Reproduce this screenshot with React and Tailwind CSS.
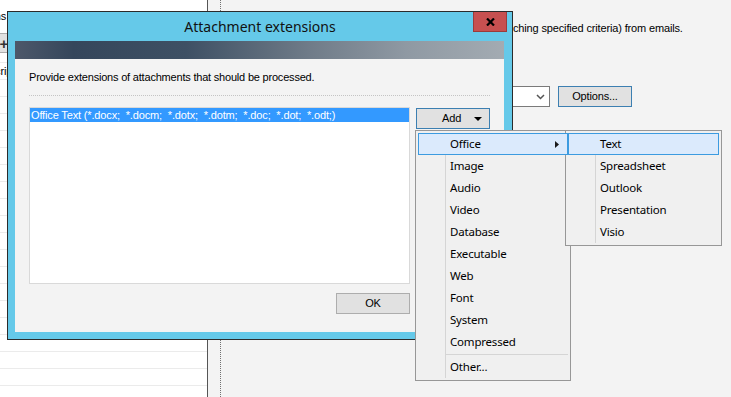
import React from "react";

const mainItems = ["Office", "Image", "Audio", "Video", "Database", "Executable", "Web", "Font", "System", "Compressed"];
const subItems = ["Text", "Spreadsheet", "Outlook", "Presentation", "Visio"];

function MenuItem({ label, active, arrow }) {
  return (
    <div
      className={
        "relative z-10 h-[22px] flex items-center pl-[31px] whitespace-nowrap " +
        (active ? "border border-[#3c9be0] bg-[#dbeafc]" : "border border-transparent")
      }
    >
      <span>{label}</span>
      {arrow && (
        <svg className="absolute right-[8px] top-[7px]" width="4" height="7" viewBox="0 0 4 7">
          <path d="M0 0 L4 3.5 L0 7 Z" fill="#1a1a1a" />
        </svg>
      )}
    </div>
  );
}

export default function App() {
  const rows = Array.from({ length: 20 });
  return (
    <div className="relative w-[731px] h-[397px] overflow-hidden bg-[#f3f3f3] font-['Liberation_Sans',Arial,sans-serif] text-[11px] tracking-[-0.15px] text-black">
      {/* Background window */}
      <div className="flex h-full">
        <div className="w-[208px] h-full bg-white border-r border-[#555555] flex flex-col overflow-hidden">
          <div className="h-[62px] flex flex-col shrink-0">
            <div className="h-[10px]" />
            <div className="h-[12px] leading-[12px] -ml-[29px] whitespace-nowrap">Actions</div>
            <div className="h-[11px]" />
            <div className="h-[20px] w-[8px] border-y border-r border-[#adadad] bg-[#e1e1e1] flex items-center justify-end overflow-hidden">
              <span className="text-[15px] font-bold leading-none -mr-[1px] text-[#333]">+</span>
            </div>
          </div>
          {rows.map((_, i) => (
            <div key={i} className="h-[17px] shrink-0 border-t border-[#ebebeb] leading-[16px] whitespace-nowrap">
              {i === 0 ? <span className="-ml-[24px] inline-block">Description</span> : null}
            </div>
          ))}
        </div>
        <div className="w-[12px]" />
        <div className="h-full border-l border-dotted border-[#707070]" />
        <div className="flex-1 flex flex-col">
          <div className="h-[22px]" />
          <div className="flex whitespace-nowrap leading-[13px]">
            <div className="w-[292px] overflow-hidden text-right">Removes attachments (mat</div>
            <span>ching specified criteria) from emails.</span>
          </div>
          <div className="h-[51px]" />
          <div className="flex items-center gap-[8px]">
            <div className="ml-[79px] w-[250px] h-[21px] bg-white border border-[#7a7a7a] flex items-center justify-end pr-[4px]">
              <svg width="9" height="6" viewBox="0 0 9 6">
                <path d="M1 1 L4.5 4.5 L8 1" fill="none" stroke="#555" strokeWidth="1.5" />
              </svg>
            </div>
            <div className="w-[74px] h-[21px] bg-[#e1e1e1] border border-[#3c7fb1] flex items-center justify-center">
              Options...
            </div>
          </div>
        </div>
      </div>

      {/* Dialog */}
      <div className="absolute left-[7px] top-[11px] w-[506px] h-[329px] border border-[#2b2b2b] bg-[#65c9e9] flex flex-col">
        <div className="relative h-[29px] shrink-0 flex items-center justify-center">
          <span className="font-['Noto_Sans',sans-serif] text-[14px] tracking-normal text-[#111]">Attachment extensions</span>
          <div className="absolute right-[5px] top-0 w-[34px] h-[20px] bg-[#c75050] border-x border-b border-[#9c3b3b] flex items-center justify-center">
            <svg width="9" height="8" viewBox="0 0 9 8">
              <path d="M1 0.5 L8 7.5 M8 0.5 L1 7.5" stroke="#000" strokeWidth="2.2" />
            </svg>
          </div>
        </div>
        <div className="flex-1 ml-[7px] mr-[8px] mb-[7px] bg-[#f3f3f3] flex flex-col">
          <div className="h-[18px] shrink-0 bg-[linear-gradient(90deg,#4d586a_0%,#35465b_12%,#3e5064_35%,#6f7b88_60%,#8f99a3_80%,#a3abb2_100%)]" />
          <div className="px-[14px] flex flex-col">
            <div className="mt-[12px] leading-[13px] whitespace-nowrap tracking-[-0.2px]">
              Provide extensions of attachments that should be processed.
            </div>
            <div className="mt-[11px] border-t border-dotted border-[#c4c4c4]" />
            <div className="mt-[11px] flex items-start">
              <div className="w-[381px] h-[177px] bg-white border border-[#d9d9d9]">
                <div className="h-[14px] bg-[#3399ff] text-white leading-[14px] pl-[1px] whitespace-nowrap">
                  Office Text (*.docx;&nbsp; *.docm;&nbsp; *.dotx;&nbsp; *.dotm;&nbsp; *.doc;&nbsp; *.dot;&nbsp; *.odt;)
                </div>
              </div>
              <div className="ml-[6px] mt-[1px] w-[74px] h-[21px] bg-[#e1e1e1] border border-[#3c7fb1] flex items-center pl-[25px]">
                <span>Add</span>
                <svg className="ml-[13px]" width="8" height="4" viewBox="0 0 8 4">
                  <path d="M0 0 L8 0 L4 4 Z" fill="#000" />
                </svg>
              </div>
            </div>
            <div className="w-[381px] flex justify-end mt-[9px]">
              <div className="w-[74px] h-[21px] bg-[#e1e1e1] border border-[#adadad] flex items-center justify-center">
                OK
              </div>
            </div>
          </div>
        </div>
      </div>

      {/* Main dropdown menu */}
      <div className="absolute left-[415px] top-[130px] w-[156px] border border-[#979797] bg-[#f0f0f0] p-[2px] font-['Noto_Sans',sans-serif] text-[11.5px] tracking-[-0.2px] text-black">
        <div className="absolute left-[29px] top-[2px] bottom-[2px] w-px bg-[#d5d5d5]" />
        {mainItems.map((label, i) => (
          <MenuItem key={label} label={label} active={i === 0} arrow={i === 0} />
        ))}
        <div className="relative h-[3px] flex items-center">
          <div className="ml-[28px] w-full h-px bg-[#d5d5d5]" />
        </div>
        <MenuItem label="Other..." />
      </div>

      {/* Submenu */}
      <div className="absolute left-[565px] top-[130px] w-[157px] border border-[#979797] bg-[#f0f0f0] p-[2px] font-['Noto_Sans',sans-serif] text-[11.5px] tracking-[-0.2px] text-black">
        <div className="absolute left-[29px] top-[2px] bottom-[2px] w-px bg-[#d5d5d5]" />
        {subItems.map((label, i) => (
          <MenuItem key={label} label={label} active={i === 0} />
        ))}
      </div>
    </div>
  );
}
